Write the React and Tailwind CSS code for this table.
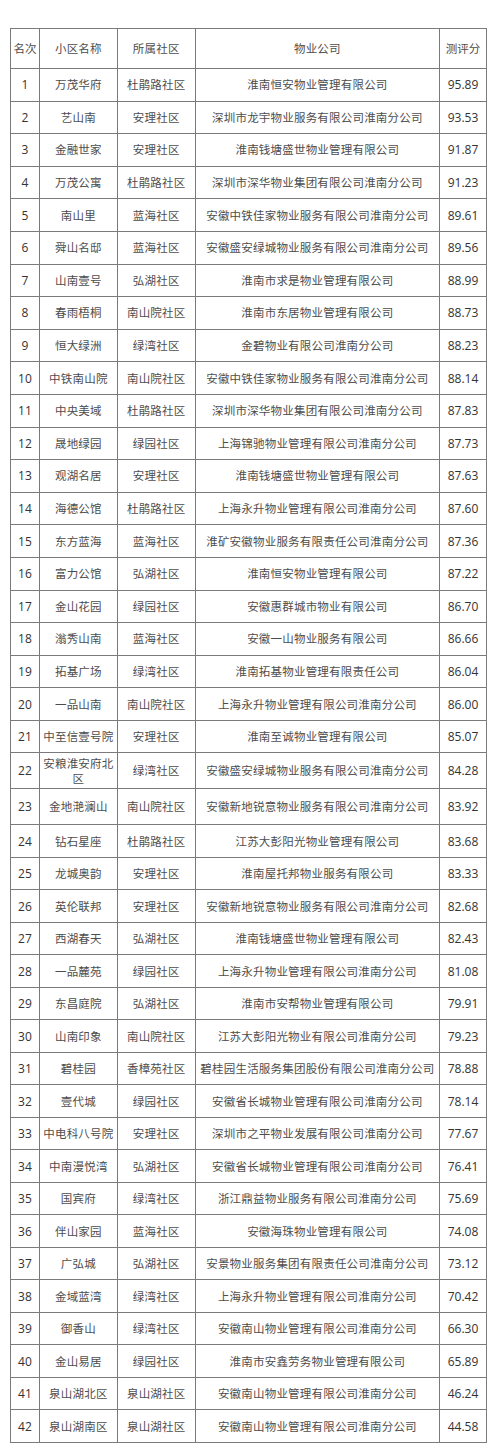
import React from "react";

const rows = [
  ["万茂华府", "杜鹃路社区", "淮南恒安物业管理有限公司", "95.89"],
  ["艺山南", "安理社区", "深圳市龙宇物业服务有限公司淮南分公司", "93.53"],
  ["金融世家", "安理社区", "淮南钱塘盛世物业管理有限公司", "91.87"],
  ["万茂公寓", "杜鹃路社区", "深圳市深华物业集团有限公司淮南分公司", "91.23"],
  ["南山里", "蓝海社区", "安徽中铁佳家物业服务有限公司淮南分公司", "89.61"],
  ["舜山名邸", "蓝海社区", "安徽盛安绿城物业服务有限公司淮南分公司", "89.56"],
  ["山南壹号", "弘湖社区", "淮南市求是物业管理有限公司", "88.99"],
  ["春雨梧桐", "南山院社区", "淮南市东居物业管理有限公司", "88.73"],
  ["恒大绿洲", "绿湾社区", "金碧物业有限公司淮南分公司", "88.23"],
  ["中铁南山院", "南山院社区", "安徽中铁佳家物业服务有限公司淮南分公司", "88.14"],
  ["中央美域", "杜鹃路社区", "深圳市深华物业集团有限公司淮南分公司", "87.83"],
  ["晟地绿园", "绿园社区", "上海锦驰物业管理有限公司淮南分公司", "87.73"],
  ["观湖名居", "安理社区", "淮南钱塘盛世物业管理有限公司", "87.63"],
  ["海德公馆", "杜鹃路社区", "上海永升物业管理有限公司淮南分公司", "87.60"],
  ["东方蓝海", "蓝海社区", "淮矿安徽物业服务有限责任公司淮南分公司", "87.36"],
  ["富力公馆", "弘湖社区", "淮南恒安物业管理有限公司", "87.22"],
  ["金山花园", "绿园社区", "安徽惠群城市物业有限公司", "86.70"],
  ["滃秀山南", "蓝海社区", "安徽一山物业服务有限公司", "86.66"],
  ["拓基广场", "绿湾社区", "淮南拓基物业管理有限责任公司", "86.04"],
  ["一品山南", "南山院社区", "上海永升物业管理有限公司淮南分公司", "86.00"],
  ["中至信壹号院", "安理社区", "淮南至诚物业管理有限公司", "85.07"],
  ["安粮淮安府北区", "绿湾社区", "安徽盛安绿城物业服务有限公司淮南分公司", "84.28"],
  ["金地滟澜山", "南山院社区", "安徽新地锐意物业服务有限公司淮南分公司", "83.92"],
  ["钻石星座", "杜鹃路社区", "江苏大彭阳光物业管理有限公司", "83.68"],
  ["龙城奥韵", "安理社区", "淮南屋托邦物业服务有限公司", "83.33"],
  ["英伦联邦", "安理社区", "安徽新地锐意物业服务有限公司淮南分公司", "82.68"],
  ["西湖春天", "弘湖社区", "淮南钱塘盛世物业管理有限公司", "82.43"],
  ["一品麓苑", "绿园社区", "上海永升物业管理有限公司淮南分公司", "81.08"],
  ["东昌庭院", "弘湖社区", "淮南市安帮物业管理有限公司", "79.91"],
  ["山南印象", "南山院社区", "江苏大彭阳光物业有限公司淮南分公司", "79.23"],
  ["碧桂园", "香樟苑社区", "碧桂园生活服务集团股份有限公司淮南分公司", "78.88"],
  ["壹代城", "绿园社区", "安徽省长城物业管理有限公司淮南分公司", "78.14"],
  ["中电科八号院", "安理社区", "深圳市之平物业发展有限公司淮南分公司", "77.67"],
  ["中南漫悦湾", "弘湖社区", "安徽省长城物业管理有限公司淮南分公司", "76.41"],
  ["国宾府", "绿湾社区", "浙江鼎益物业服务有限公司淮南分公司", "75.69"],
  ["伴山家园", "蓝海社区", "安徽海珠物业管理有限公司", "74.08"],
  ["广弘城", "弘湖社区", "安景物业服务集团有限责任公司淮南分公司", "73.12"],
  ["金域蓝湾", "绿湾社区", "上海永升物业管理有限公司淮南分公司", "70.42"],
  ["御香山", "绿湾社区", "安徽南山物业管理有限公司淮南分公司", "66.30"],
  ["金山易居", "绿园社区", "淮南市安鑫劳务物业管理有限公司", "65.89"],
  ["泉山湖北区", "泉山湖社区", "安徽南山物业管理有限公司淮南分公司", "46.24"],
  ["泉山湖南区", "泉山湖社区", "安徽南山物业管理有限公司淮南分公司", "44.58"],
];

const cjk = "font-['Noto_Sans_CJK_SC',sans-serif] font-normal text-[11.5px] tracking-[0.2px] text-[#4d4d4d]";
const num = "font-['Open_Sans',sans-serif] font-medium text-[12px] text-[#333]";
const cell = "flex items-center justify-center border-r border-b border-[#7a7a7a] text-center leading-[15px]";

function rowHeight(i) {
  if (i < 21) return "h-[32.6px]";
  if (i === 21) return "h-[36px]";
  if (i === 22) return "h-[36px]";
  return "h-[32.5px]";
}

export default function App() {
  return (
    <div className="w-[500px] h-[1455px] bg-white pt-[28px] pl-[10px]">
      <div className="w-[477px] border-l border-t border-[#7a7a7a]">
        <div className="flex h-[40px]">
          <div className={`${cell} ${cjk} w-[29px] tracking-[0px]`}>名次</div>
          <div className={`${cell} ${cjk} w-[78px]`}>小区名称</div>
          <div className={`${cell} ${cjk} w-[78px]`}>所属社区</div>
          <div className={`${cell} ${cjk} w-[245px]`}>物业公司</div>
          <div className={`${cell} ${cjk} w-[47px] tracking-[0px]`}>测评分</div>
        </div>
        {rows.map((r, i) => (
          <div key={i} className={`flex ${rowHeight(i)}`}>
            <div className={`${cell} ${num} w-[29px]`}>{i + 1}</div>
            <div className={`${cell} ${cjk} w-[78px] px-[2px]`}>{r[0]}</div>
            <div className={`${cell} ${cjk} w-[78px]`}>{r[1]}</div>
            <div className={`${cell} ${cjk} w-[245px] whitespace-nowrap`}>{r[2]}</div>
            <div className={`${cell} ${num} w-[47px]`}>{r[3]}</div>
          </div>
        ))}
      </div>
    </div>
  );
}
